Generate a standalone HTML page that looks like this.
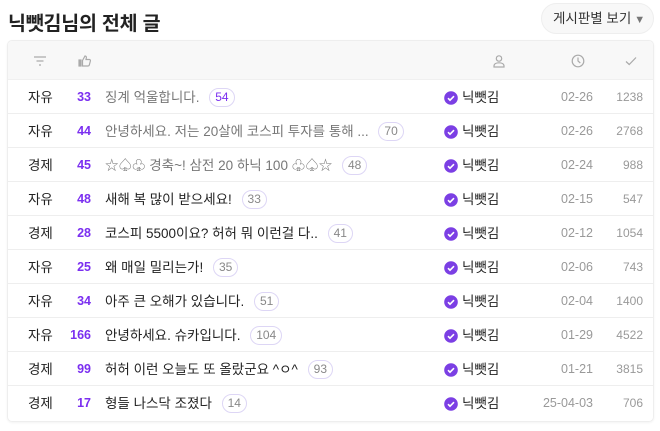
<!DOCTYPE html>
<html><head><meta charset="utf-8"><style>
*{margin:0;padding:0;box-sizing:border-box}
body{width:660px;height:431px;background:#fff;font-family:"Liberation Sans","Noto Sans CJK KR",sans-serif;position:relative;overflow:hidden;color:#222}
h1{position:absolute;left:8px;top:7px;font-size:19.5px;font-weight:bold;color:#222;letter-spacing:-0.2px}
.btn{position:absolute;left:541px;top:3px;width:113px;height:31px;border:1px solid #eee;border-radius:16px;background:#f8f8f8;font-size:13.5px;line-height:29px;padding-left:11px;color:#333}
.btn span{color:#777;font-size:11px;margin-left:3px}
.box{position:absolute;left:7px;top:40px;width:647px;height:382px;border:1px solid #eee;border-radius:5px;overflow:hidden;box-shadow:0 1px 2px rgba(0,0,0,.05)}
.hd{height:39px;background:#f8f8f8;position:relative;border-bottom:1px solid #f0f0f0}
.hd svg{position:absolute;top:13px}
.row{height:34px;position:relative;border-bottom:1px solid #eee;font-size:13.5px}
.row:last-child{border-bottom:none}
.row>*{position:absolute;top:1px;line-height:33px}
.cat{left:20px;color:#222}
.num{right:562px;color:#7b2ff0;font-weight:bold;font-size:12.5px}
.t{left:97px;white-space:nowrap}
.t.v{color:#777}
.b{display:inline-block;border:1px solid #ddd6f5;border-radius:10px;padding:0 5px;line-height:17px;font-size:12px;color:#888;margin-left:6px;vertical-align:1px}
.b.p{color:#7b2ff0}
.au{left:436px;color:#222}
.au svg{vertical-align:-3px;margin-right:4px}
.d{right:60px;color:#999;font-size:12.5px}
.vw{right:10px;color:#999;font-size:12px}
</style></head><body>
<h1>닉뺏김님의 전체 글</h1>
<div class="btn">게시판별 보기<span>▼</span></div>
<div class="box">
<div class="hd">
<svg style="left:25px" width="14" height="14" viewBox="0 0 14 14" fill="none" stroke="#aaa" stroke-width="1.2"><path d="M1 3h12M3.5 7h7M6 11h2"/></svg>
<svg style="left:70px" width="14" height="14" viewBox="0 0 14 14" fill="none" stroke="#aaa" stroke-width="1.2"><rect x="1" y="6" width="2" height="6" fill="#aaa"/><path d="M4.5 6.5 7 2c1.2 0 1.6 1 1.3 2L8 5.5h3.3c.8 0 1.3.7 1.1 1.4l-1.1 4.2c-.2.6-.7.9-1.3.9H4.5z"/></svg>
<svg style="left:484px" width="14" height="14" viewBox="0 0 14 14" fill="none" stroke="#aaa" stroke-width="1.2"><circle cx="7" cy="4.5" r="2.7"/><path d="M2 13v-1c0-2 2-3.2 5-3.2s5 1.2 5 3.2v1z"/></svg>
<svg style="left:563px" width="14" height="14" viewBox="0 0 14 14" fill="none" stroke="#aaa" stroke-width="1.2"><circle cx="7" cy="7" r="5.8"/><path d="M7 3.5V7l2.3 2"/></svg>
<svg style="left:616px" width="14" height="14" viewBox="0 0 14 14" fill="none" stroke="#aaa" stroke-width="1.2"><path d="M2 7.5l3.2 3L12 3.5"/></svg>
</div>
<div class="row"><span class="cat">자유</span><span class="num">33</span><span class="t v">징계 억울합니다. <span class="b p">54</span></span><span class="au"><svg width="14" height="14" viewBox="0 0 14 14"><circle cx="7" cy="7" r="6.8" fill="#7b3fe4"/><path d="M4 7.2l2 2 4-4" stroke="#fff" stroke-width="1.6" fill="none"/></svg>닉뺏김</span><span class="d">02-26</span><span class="vw">1238</span></div>
<div class="row"><span class="cat">자유</span><span class="num">44</span><span class="t v">안녕하세요. 저는 20살에 코스피 투자를 통해 ... <span class="b">70</span></span><span class="au"><svg width="14" height="14" viewBox="0 0 14 14"><circle cx="7" cy="7" r="6.8" fill="#7b3fe4"/><path d="M4 7.2l2 2 4-4" stroke="#fff" stroke-width="1.6" fill="none"/></svg>닉뺏김</span><span class="d">02-26</span><span class="vw">2768</span></div>
<div class="row"><span class="cat">경제</span><span class="num">45</span><span class="t v">☆♤♧ 경축~! 삼전 20 하닉 100 ♧♤☆ <span class="b">48</span></span><span class="au"><svg width="14" height="14" viewBox="0 0 14 14"><circle cx="7" cy="7" r="6.8" fill="#7b3fe4"/><path d="M4 7.2l2 2 4-4" stroke="#fff" stroke-width="1.6" fill="none"/></svg>닉뺏김</span><span class="d">02-24</span><span class="vw">988</span></div>
<div class="row"><span class="cat">자유</span><span class="num">48</span><span class="t">새해 복 많이 받으세요! <span class="b">33</span></span><span class="au"><svg width="14" height="14" viewBox="0 0 14 14"><circle cx="7" cy="7" r="6.8" fill="#7b3fe4"/><path d="M4 7.2l2 2 4-4" stroke="#fff" stroke-width="1.6" fill="none"/></svg>닉뺏김</span><span class="d">02-15</span><span class="vw">547</span></div>
<div class="row"><span class="cat">경제</span><span class="num">28</span><span class="t">코스피 5500이요? 허허 뭐 이런걸 다.. <span class="b">41</span></span><span class="au"><svg width="14" height="14" viewBox="0 0 14 14"><circle cx="7" cy="7" r="6.8" fill="#7b3fe4"/><path d="M4 7.2l2 2 4-4" stroke="#fff" stroke-width="1.6" fill="none"/></svg>닉뺏김</span><span class="d">02-12</span><span class="vw">1054</span></div>
<div class="row"><span class="cat">자유</span><span class="num">25</span><span class="t">왜 매일 밀리는가! <span class="b">35</span></span><span class="au"><svg width="14" height="14" viewBox="0 0 14 14"><circle cx="7" cy="7" r="6.8" fill="#7b3fe4"/><path d="M4 7.2l2 2 4-4" stroke="#fff" stroke-width="1.6" fill="none"/></svg>닉뺏김</span><span class="d">02-06</span><span class="vw">743</span></div>
<div class="row"><span class="cat">자유</span><span class="num">34</span><span class="t">아주 큰 오해가 있습니다. <span class="b">51</span></span><span class="au"><svg width="14" height="14" viewBox="0 0 14 14"><circle cx="7" cy="7" r="6.8" fill="#7b3fe4"/><path d="M4 7.2l2 2 4-4" stroke="#fff" stroke-width="1.6" fill="none"/></svg>닉뺏김</span><span class="d">02-04</span><span class="vw">1400</span></div>
<div class="row"><span class="cat">자유</span><span class="num">166</span><span class="t">안녕하세요. 슈카입니다. <span class="b">104</span></span><span class="au"><svg width="14" height="14" viewBox="0 0 14 14"><circle cx="7" cy="7" r="6.8" fill="#7b3fe4"/><path d="M4 7.2l2 2 4-4" stroke="#fff" stroke-width="1.6" fill="none"/></svg>닉뺏김</span><span class="d">01-29</span><span class="vw">4522</span></div>
<div class="row"><span class="cat">경제</span><span class="num">99</span><span class="t">허허 이런 오늘도 또 올랐군요 ^ㅇ^ <span class="b">93</span></span><span class="au"><svg width="14" height="14" viewBox="0 0 14 14"><circle cx="7" cy="7" r="6.8" fill="#7b3fe4"/><path d="M4 7.2l2 2 4-4" stroke="#fff" stroke-width="1.6" fill="none"/></svg>닉뺏김</span><span class="d">01-21</span><span class="vw">3815</span></div>
<div class="row"><span class="cat">경제</span><span class="num">17</span><span class="t">형들 나스닥 조졌다 <span class="b">14</span></span><span class="au"><svg width="14" height="14" viewBox="0 0 14 14"><circle cx="7" cy="7" r="6.8" fill="#7b3fe4"/><path d="M4 7.2l2 2 4-4" stroke="#fff" stroke-width="1.6" fill="none"/></svg>닉뺏김</span><span class="d">25-04-03</span><span class="vw">706</span></div>
</div>
</body></html>
